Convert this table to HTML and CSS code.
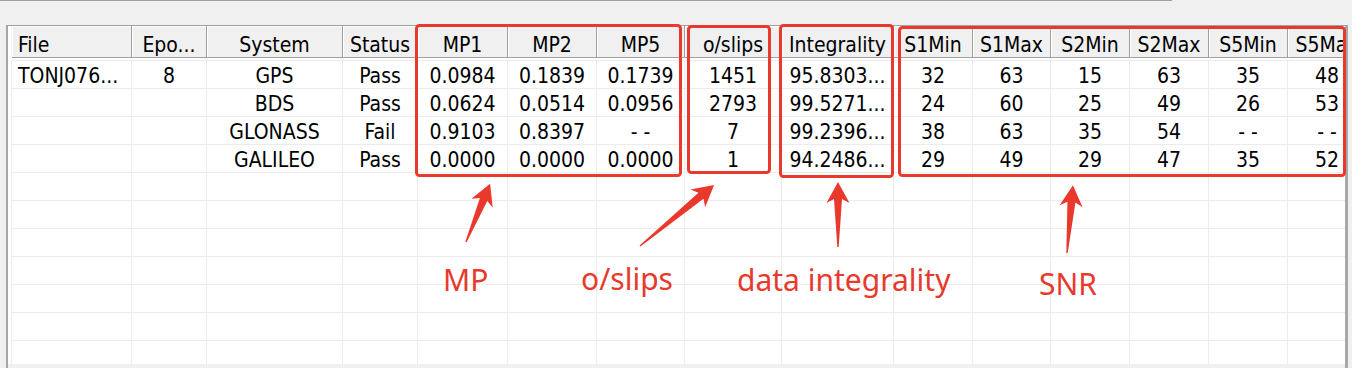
FILE: index.html
```html
<!DOCTYPE html>
<html>
<head>
<meta charset="utf-8">
<link rel="stylesheet" href="styles.css">
</head>
<body>
<div class="topline"></div>
<div class="frame">
  <div class="viewport">
    <div class="row head">
      <div class="c left">File</div><div class="c">Epo...</div><div class="c">System</div><div class="c">Status</div><div class="c">MP1</div><div class="c">MP2</div><div class="c">MP5</div><div class="c">o/slips</div><div class="c">Integrality</div><div class="c">S1Min</div><div class="c">S1Max</div><div class="c">S2Min</div><div class="c">S2Max</div><div class="c">S5Min</div><div class="c">S5Max</div>
    </div>
    <div class="spacer"></div>
    <div class="row data">
      <div class="c left">TONJ076...</div><div class="c">8</div><div class="c">GPS</div><div class="c">Pass</div><div class="c">0.0984</div><div class="c">0.1839</div><div class="c">0.1739</div><div class="c">1451</div><div class="c">95.8303...</div><div class="c">32</div><div class="c">63</div><div class="c">15</div><div class="c">63</div><div class="c">35</div><div class="c">48</div>
    </div>
    <div class="row data">
      <div class="c left"></div><div class="c"></div><div class="c">BDS</div><div class="c">Pass</div><div class="c">0.0624</div><div class="c">0.0514</div><div class="c">0.0956</div><div class="c">2793</div><div class="c">99.5271...</div><div class="c">24</div><div class="c">60</div><div class="c">25</div><div class="c">49</div><div class="c">26</div><div class="c">53</div>
    </div>
    <div class="row data">
      <div class="c left"></div><div class="c"></div><div class="c">GLONASS</div><div class="c">Fail</div><div class="c">0.9103</div><div class="c">0.8397</div><div class="c">- -</div><div class="c">7</div><div class="c">99.2396...</div><div class="c">38</div><div class="c">63</div><div class="c">35</div><div class="c">54</div><div class="c">- -</div><div class="c">- -</div>
    </div>
    <div class="row data">
      <div class="c left"></div><div class="c"></div><div class="c">GALILEO</div><div class="c">Pass</div><div class="c">0.0000</div><div class="c">0.0000</div><div class="c">0.0000</div><div class="c">1</div><div class="c">94.2486...</div><div class="c">29</div><div class="c">49</div><div class="c">29</div><div class="c">47</div><div class="c">35</div><div class="c">52</div>
    </div>
    <div class="row data empty"><div class="c"></div><div class="c"></div><div class="c"></div><div class="c"></div><div class="c"></div><div class="c"></div><div class="c"></div><div class="c"></div><div class="c"></div><div class="c"></div><div class="c"></div><div class="c"></div><div class="c"></div><div class="c"></div><div class="c"></div></div>
    <div class="row data empty"><div class="c"></div><div class="c"></div><div class="c"></div><div class="c"></div><div class="c"></div><div class="c"></div><div class="c"></div><div class="c"></div><div class="c"></div><div class="c"></div><div class="c"></div><div class="c"></div><div class="c"></div><div class="c"></div><div class="c"></div></div>
    <div class="row data empty"><div class="c"></div><div class="c"></div><div class="c"></div><div class="c"></div><div class="c"></div><div class="c"></div><div class="c"></div><div class="c"></div><div class="c"></div><div class="c"></div><div class="c"></div><div class="c"></div><div class="c"></div><div class="c"></div><div class="c"></div></div>
    <div class="row data empty"><div class="c"></div><div class="c"></div><div class="c"></div><div class="c"></div><div class="c"></div><div class="c"></div><div class="c"></div><div class="c"></div><div class="c"></div><div class="c"></div><div class="c"></div><div class="c"></div><div class="c"></div><div class="c"></div><div class="c"></div></div>
    <div class="row data empty"><div class="c"></div><div class="c"></div><div class="c"></div><div class="c"></div><div class="c"></div><div class="c"></div><div class="c"></div><div class="c"></div><div class="c"></div><div class="c"></div><div class="c"></div><div class="c"></div><div class="c"></div><div class="c"></div><div class="c"></div></div>
    <div class="row data empty"><div class="c"></div><div class="c"></div><div class="c"></div><div class="c"></div><div class="c"></div><div class="c"></div><div class="c"></div><div class="c"></div><div class="c"></div><div class="c"></div><div class="c"></div><div class="c"></div><div class="c"></div><div class="c"></div><div class="c"></div></div>
    <div class="row data empty"><div class="c"></div><div class="c"></div><div class="c"></div><div class="c"></div><div class="c"></div><div class="c"></div><div class="c"></div><div class="c"></div><div class="c"></div><div class="c"></div><div class="c"></div><div class="c"></div><div class="c"></div><div class="c"></div><div class="c"></div></div>
  </div>
</div>
<svg class="notes" width="1352" height="368" viewBox="0 0 1352 368" xmlns="http://www.w3.org/2000/svg">
  <g class="box">
    <rect x="416.5" y="25.5" width="264" height="150" rx="3"/>
    <rect x="688.5" y="26.5" width="81" height="146" rx="3"/>
    <rect x="780.5" y="25.5" width="112" height="151" rx="3"/>
    <rect x="899.5" y="27.5" width="445" height="148" rx="3"/>
  </g>
  <g class="arrow">
    <g transform="translate(466,242) rotate(-67.5)"><polygon points="0,-0.7 46,-4 42,-11.5 63,0 42,11.5 46,4 0,0.7"/></g>
    <g transform="translate(640,246) rotate(-39.5)"><polygon points="0,-0.7 79,-4 75,-11.5 96,0 75,11.5 79,4 0,0.7"/></g>
    <g transform="translate(838,247) rotate(-90)"><polygon points="0,-0.7 48,-4 44,-11.5 65,0 44,11.5 48,4 0,0.7"/></g>
    <g transform="translate(1067,253) rotate(-85)"><polygon points="0,-0.7 51,-4 47,-11.5 68,0 47,11.5 51,4 0,0.7"/></g>
  </g>
  <g class="label">
    <text x="443" y="291">MP</text>
    <text x="581" y="290">o/slips</text>
    <text x="737" y="291">data integrality</text>
    <text x="1039" y="295">SNR</text>
  </g>
</svg>
</body>
</html>
```

FILE: styles.css
```css
html, body {
  margin: 0;
  padding: 0;
}
body {
  width: 1352px;
  height: 368px;
  overflow: hidden;
  background: #f0f0f0;
  position: relative;
  font-family: "DejaVu Sans Condensed", "DejaVu Sans", sans-serif;
  font-stretch: condensed;
  font-size: 21px;
  color: #000;
}
.topline {
  width: 1172px;
  height: 1px;
  background: #a0a0a0;
}
.frame {
  box-sizing: border-box;
  margin-top: 24px;
  margin-left: 6px;
  width: 1342px;
  height: 343px;
  border-top: 1px solid #a0a0a0;
  border-left: 2px solid #a6a6a6;
  border-right: 3px solid #a8a8a8;
  background: #f0f0f0;
}
.viewport {
  box-sizing: border-box;
  width: 1337px;
  height: 338px;
  overflow: hidden;
  background: #fff;
  padding-left: 3px;
}
.row {
  display: grid;
  grid-template-columns: 120px 75px 136px 75px 90px 89px 88px 97px 112px 79px 78px 79px 79px 79px 79px;
  width: 1356px;
  border-left: 1px solid #ececec;
}
.c {
  box-sizing: border-box;
  text-align: center;
  white-space: nowrap;
  overflow: hidden;
  line-height: 23px;
}
.c.left {
  text-align: left;
  padding-left: 6px;
}
.head {
  border-left-color: #f5f5f5;
}
.head .c {
  height: 32px;
  padding-top: 8px;
  background: #f0f0f0;
  border-right: 1px solid #a0a0a0;
  border-bottom: 1px solid #a0a0a0;
  box-shadow: inset 1px 1px 0 #ffffff;
}
.head .c.left {
  padding-left: 6px;
}
.spacer {
  height: 2px;
  border-bottom: 1px solid #ececec;
}
.data .c {
  height: 28px;
  padding-top: 4px;
  border-right: 1px solid #ececec;
  border-bottom: 1px solid #ececec;
}
.notes {
  position: absolute;
  left: 0;
  top: 0;
  pointer-events: none;
}
.box rect {
  fill: none;
  stroke: #e8392c;
  stroke-width: 3;
}
.arrow polygon {
  fill: #e8392c;
}
.label text {
  fill: #e8392c;
  font-family: "Noto Sans", "Open Sans", sans-serif;
  font-stretch: normal;
  font-size: 30px;
}
```
